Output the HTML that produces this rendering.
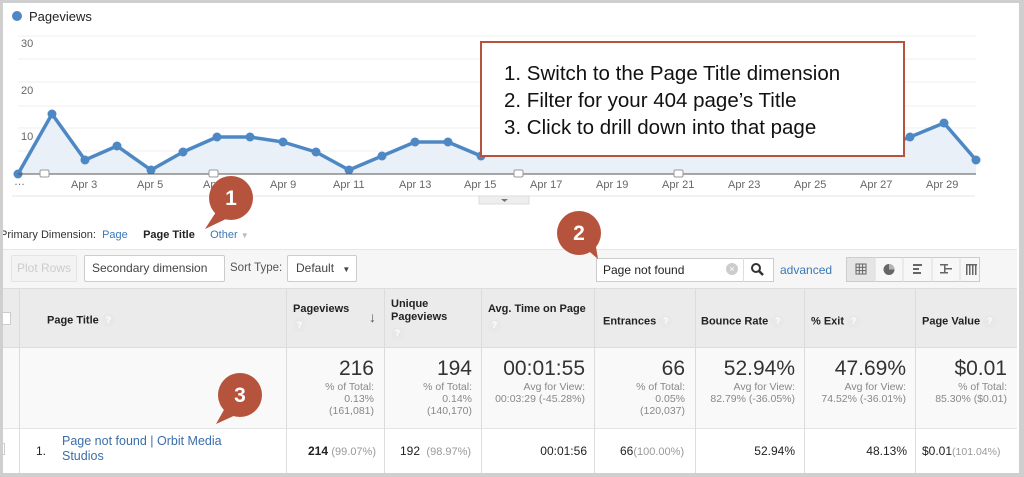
<!DOCTYPE html>
<html><head><meta charset="utf-8"><style>
*{margin:0;padding:0;box-sizing:border-box}
body{width:1024px;height:477px;overflow:hidden;background:#fff;font-family:"Liberation Sans",Arial,sans-serif;position:relative;color:#222}
.a{position:absolute}
.frame{left:0;top:0;width:1024px;height:477px;border:3px solid #cfcfcf;border-right-width:5px;border-bottom-width:4px}
.ax{font-size:11px;color:#666}
.hd{font-size:11px;font-weight:bold;color:#222}
.q{display:inline-block;width:13px;height:13px;border-radius:50%;background:#e8e8e8;color:#fff;font-size:9px;text-align:center;line-height:13px;font-weight:bold;vertical-align:middle}
.big{font-size:21px;color:#333;text-align:right}
.sm{font-size:10.5px;color:#888;text-align:right;line-height:12px}
.vl{position:absolute;width:1px;background:#dcdcdc}
.btn{border:1px solid #ccc;border-radius:2px;background:#fafafa;font-size:12px;color:#444}
</style></head><body>
<div class="a" style="left:12px;top:11px;width:10px;height:10px;border-radius:50%;background:#4e88c4"></div>
<div class="a" style="left:29px;top:9px;font-size:13px;color:#222">Pageviews</div>
<svg class="a" style="left:0;top:0" width="1024" height="240">
<g stroke="#efefef" stroke-width="1">
<line x1="18" y1="36" x2="976" y2="36"/><line x1="18" y1="59" x2="976" y2="59"/><line x1="18" y1="82" x2="976" y2="82"/><line x1="18" y1="106" x2="976" y2="106"/><line x1="18" y1="128" x2="976" y2="128"/><line x1="18" y1="151" x2="976" y2="151"/>
</g>
<polygon fill="#e9f0f8" points="18,174 18,174 52,114 85,160 117,146 151,170 183,152 217,137 250,137 283,142 316,152 349,170 382,156 415,142 448,142 481,156 514,150 547,150 580,150 613,150 646,150 679,150 712,150 745,150 778,150 811,150 844,150 877,150 910,137 944,123 976,160 976,174"/>
<polyline fill="none" stroke="#4e88c4" stroke-width="3.5" stroke-linejoin="round" points="18,174 52,114 85,160 117,146 151,170 183,152 217,137 250,137 283,142 316,152 349,170 382,156 415,142 448,142 481,156 514,150 877,150 910,137 944,123 976,160"/>
<g fill="#4e88c4">
<circle cx="18" cy="174" r="4.5"/><circle cx="52" cy="114" r="4.5"/><circle cx="85" cy="160" r="4.5"/><circle cx="117" cy="146" r="4.5"/><circle cx="151" cy="170" r="4.5"/><circle cx="183" cy="152" r="4.5"/><circle cx="217" cy="137" r="4.5"/><circle cx="250" cy="137" r="4.5"/><circle cx="283" cy="142" r="4.5"/><circle cx="316" cy="152" r="4.5"/><circle cx="349" cy="170" r="4.5"/><circle cx="382" cy="156" r="4.5"/><circle cx="415" cy="142" r="4.5"/><circle cx="448" cy="142" r="4.5"/><circle cx="481" cy="156" r="4.5"/><circle cx="910" cy="137" r="4.5"/><circle cx="944" cy="123" r="4.5"/><circle cx="976" cy="160" r="4.5"/>
</g>
<line x1="18" y1="174" x2="976" y2="174" stroke="#555" stroke-width="1"/>
<line x1="12" y1="196" x2="975" y2="196" stroke="#e5e5e5" stroke-width="1"/>
<g fill="#fff" stroke="#999" stroke-width="1">
<rect x="40" y="170" width="9" height="7" rx="1.5"/><rect x="209" y="170" width="9" height="7" rx="1.5"/><rect x="514" y="170" width="9" height="7" rx="1.5"/><rect x="674" y="170" width="9" height="7" rx="1.5"/>
</g>
<rect x="479" y="196" width="50" height="8" fill="#eee" stroke="#ddd"/>
<path d="M501 199 h7 l-3.5 3z" fill="#777"/>
</svg>
<div class="a ax" style="left:21px;top:38px">30</div>
<div class="a ax" style="left:21px;top:85px">20</div>
<div class="a ax" style="left:21px;top:131px">10</div>
<div class="a ax" style="left:14px;top:176px">…</div>
<div class="a ax" style="top:179px;left:0;width:1024px;height:14px">
<span class="a" style="left:71px">Apr 3</span><span class="a" style="left:137px">Apr 5</span><span class="a" style="left:203px">Apr 7</span><span class="a" style="left:270px">Apr 9</span><span class="a" style="left:333px">Apr 11</span><span class="a" style="left:399px">Apr 13</span><span class="a" style="left:464px">Apr 15</span><span class="a" style="left:530px">Apr 17</span><span class="a" style="left:596px">Apr 19</span><span class="a" style="left:662px">Apr 21</span><span class="a" style="left:728px">Apr 23</span><span class="a" style="left:794px">Apr 25</span><span class="a" style="left:860px">Apr 27</span><span class="a" style="left:926px">Apr 29</span>
</div>
<div class="a" style="left:480px;top:41px;width:425px;height:116px;background:#fff;border:2px solid #b5533c"></div>
<div class="a" style="left:504px;top:60px;font-size:20.5px;line-height:27px;color:#111;white-space:nowrap">1. Switch to the Page Title dimension<br>2. Filter for your 404 page’s Title<br>3. Click to drill down into that page</div>

<div class="a" style="left:0;top:229px;font-size:11px;color:#333">Primary Dimension:&nbsp;&nbsp;<span style="color:#3b78b6">Page</span>&nbsp;&nbsp;&nbsp;&nbsp;&nbsp;<b style="color:#222">Page Title</b>&nbsp;&nbsp;&nbsp;&nbsp;&nbsp;<span style="color:#3b78b6">Other</span> <span style="color:#bbb;font-size:8px">▼</span></div>

<div class="a" style="left:3px;top:249px;width:1014px;height:39px;background:#f6f6f6;border-top:1px solid #e6e6e6"></div>
<div class="a btn" style="left:11px;top:255px;width:66px;height:27px;color:#ccc;line-height:25px;text-align:center;background:#f3f3f3;border-color:#e3e3e3">Plot Rows</div>
<div class="a btn" style="left:84px;top:255px;width:141px;height:27px;line-height:25px;padding-left:7px;background:#fff">Secondary dimension <span style="font-size:8px;margin-left:6px">▼</span></div>
<div class="a" style="left:230px;top:262px;font-size:11.5px;color:#555">Sort Type:</div>
<div class="a btn" style="left:287px;top:255px;width:70px;height:27px;line-height:25px;padding-left:8px;background:#fff">Default <span style="font-size:8px;margin-left:5px">▼</span></div>
<div class="a" style="left:596px;top:258px;width:178px;height:24px;border:1px solid #ccc;background:#fff;font-size:12px;line-height:22px;padding-left:6px;color:#222">Page not found</div>
<div class="a" style="left:726px;top:263px;width:12px;height:12px;border-radius:50%;background:#ccc;color:#fff;font-size:9px;line-height:12px;text-align:center">×</div>
<div class="a" style="left:743px;top:258px;width:1px;height:24px;background:#ddd"></div>
<svg class="a" style="left:750px;top:262px" width="16" height="16"><circle cx="6" cy="6" r="4" fill="none" stroke="#333" stroke-width="2"/><line x1="9" y1="9" x2="13" y2="13" stroke="#333" stroke-width="2.5"/></svg>
<div class="a" style="left:780px;top:263px;font-size:12px;color:#3b78b6">advanced</div>
<div class="a" style="left:846px;top:257px;width:134px;height:25px;border:1px solid #ccc;background:#f7f7f7"></div>
<div class="a" style="left:847px;top:258px;width:28px;height:23px;background:#e5e5e5"></div>
<svg class="a" style="left:846px;top:257px" width="134" height="25">
<g stroke="#ddd"><line x1="29" y1="0" x2="29" y2="25"/><line x1="57" y1="0" x2="57" y2="25"/><line x1="86" y1="0" x2="86" y2="25"/><line x1="114" y1="0" x2="114" y2="25"/></g>
<g fill="none" stroke="#666" stroke-width="1"><rect x="10" y="7" width="10" height="10"/><line x1="13.3" y1="7" x2="13.3" y2="17"/><line x1="16.6" y1="7" x2="16.6" y2="17"/><line x1="10" y1="10.3" x2="20" y2="10.3"/><line x1="10" y1="13.6" x2="20" y2="13.6"/></g>
<circle cx="43" cy="12.5" r="5.5" fill="#666"/><path d="M43 12.5 V7 A5.5 5.5 0 0 1 48.5 12.5z" fill="#fff" opacity=".5"/>
<g fill="#666"><rect x="67" y="7" width="9" height="2"/><rect x="67" y="11" width="6" height="2"/><rect x="67" y="15" width="8" height="2"/></g>
<g fill="#666"><rect x="94" y="7" width="8" height="1.5"/><rect x="98" y="11" width="8" height="1.5"/><rect x="94" y="15" width="8" height="1.5"/><rect x="98" y="8" width="1.5" height="8"/></g>
<g fill="#666"><rect x="120" y="7" width="1.5" height="11"/><rect x="123" y="7" width="1.5" height="11"/><rect x="126" y="7" width="1.5" height="11"/><rect x="129" y="7" width="1.5" height="11"/><rect x="120" y="7" width="11" height="1.5"/></g>
</svg>

<div class="a" style="left:3px;top:288px;width:1014px;height:60px;background:#ebebeb;border-top:1px solid #ddd;border-bottom:1px solid #ddd"></div>
<div class="a" style="left:3px;top:348px;width:1014px;height:80px;background:#f9f9f9"></div>
<div class="a" style="left:3px;top:428px;width:1014px;height:42px;background:#fff;border-top:1px solid #e4e4e4"></div>
<div class="vl" style="left:19px;top:288px;height:185px"></div>
<div class="vl" style="left:286px;top:288px;height:185px"></div>
<div class="vl" style="left:384px;top:288px;height:185px"></div>
<div class="vl" style="left:481px;top:288px;height:185px"></div>
<div class="vl" style="left:594px;top:288px;height:185px"></div>
<div class="vl" style="left:695px;top:288px;height:185px"></div>
<div class="vl" style="left:804px;top:288px;height:185px"></div>
<div class="vl" style="left:915px;top:288px;height:185px"></div>
<div class="a" style="left:3px;top:312px;width:8px;height:13px;border:1px solid #ccc;border-left:none;background:#fff"></div>

<div class="a hd" style="left:47px;top:314px">Page Title <span class="q">?</span></div>
<div class="a hd" style="left:293px;top:303px">Pageviews<br><span class="q" style="margin-top:4px">?</span></div>
<div class="a" style="left:369px;top:309px;font-size:14px;color:#555">↓</div>
<div class="a hd" style="left:391px;top:298px;line-height:13px">Unique<br>Pageviews<br><span class="q" style="margin-top:3px">?</span></div>
<div class="a hd" style="left:488px;top:303px">Avg. Time on Page<br><span class="q" style="margin-top:4px">?</span></div>
<div class="a hd" style="left:603px;top:315px">Entrances <span class="q">?</span></div>
<div class="a hd" style="left:701px;top:315px">Bounce Rate <span class="q">?</span></div>
<div class="a hd" style="left:811px;top:315px">% Exit <span class="q">?</span></div>
<div class="a hd" style="left:922px;top:315px">Page Value <span class="q">?</span></div>

<div class="a" style="left:286px;top:357px;width:88px"><div class="big">216</div><div class="sm">% of Total:<br>0.13%<br>(161,081)</div></div>
<div class="a" style="left:384px;top:357px;width:88px"><div class="big">194</div><div class="sm">% of Total:<br>0.14%<br>(140,170)</div></div>
<div class="a" style="left:470px;top:357px;width:115px"><div class="big">00:01:55</div><div class="sm">Avg for View:<br>00:03:29 (-45.28%)</div></div>
<div class="a" style="left:594px;top:357px;width:91px"><div class="big">66</div><div class="sm">% of Total:<br>0.05%<br>(120,037)</div></div>
<div class="a" style="left:695px;top:357px;width:100px"><div class="big">52.94%</div><div class="sm">Avg for View:<br>82.79% (-36.05%)</div></div>
<div class="a" style="left:804px;top:357px;width:102px"><div class="big">47.69%</div><div class="sm">Avg for View:<br>74.52% (-36.01%)</div></div>
<div class="a" style="left:915px;top:357px;width:92px"><div class="big">$0.01</div><div class="sm">% of Total:<br>85.30% ($0.01)</div></div>

<div class="a" style="left:0;top:443px;width:5px;height:12px;border:1px solid #ccc;border-left:none"></div>
<div class="a" style="left:36px;top:444px;font-size:12px">1.</div>
<div class="a" style="left:62px;top:434px;font-size:12.5px;color:#3b6ea8;line-height:15px">Page not found | Orbit Media<br>Studios</div>
<div class="a" style="left:286px;top:444px;width:90px;text-align:right;font-size:12px"><b>214</b> <span style="color:#999;font-size:11px">(99.07%)</span></div>
<div class="a" style="left:400px;top:444px;font-size:12px">192 <span style="color:#999;font-size:11px">&nbsp;(98.97%)</span></div>
<div class="a" style="left:481px;top:444px;width:106px;text-align:right;font-size:12px">00:01:56</div>
<div class="a" style="left:620px;top:444px;font-size:12px">66<span style="color:#999;font-size:11px">(100.00%)</span></div>
<div class="a" style="left:695px;top:444px;width:100px;text-align:right;font-size:12px">52.94%</div>
<div class="a" style="left:804px;top:444px;width:103px;text-align:right;font-size:12px">48.13%</div>
<div class="a" style="left:922px;top:444px;font-size:12px">$0.01<span style="color:#999;font-size:10.5px">(101.04%)</span></div>

<svg class="a" style="left:0;top:0" width="1024" height="477">
<g fill="#b5533c">
<circle cx="231" cy="198" r="22"/><path d="M216 212 L205 229 L228 218z"/>
<circle cx="579" cy="233" r="22"/><path d="M584 247 L598 259 L595 241z"/>
<circle cx="240" cy="395" r="22"/><path d="M225 408 L216 424 L238 414z"/>
</g>
<g fill="#fff" font-family="Liberation Sans, sans-serif" font-weight="bold" font-size="21" text-anchor="middle">
<text x="231" y="205">1</text><text x="579" y="240">2</text><text x="240" y="402">3</text>
</g>
</svg>
<div class="a frame"></div>
</body></html>
